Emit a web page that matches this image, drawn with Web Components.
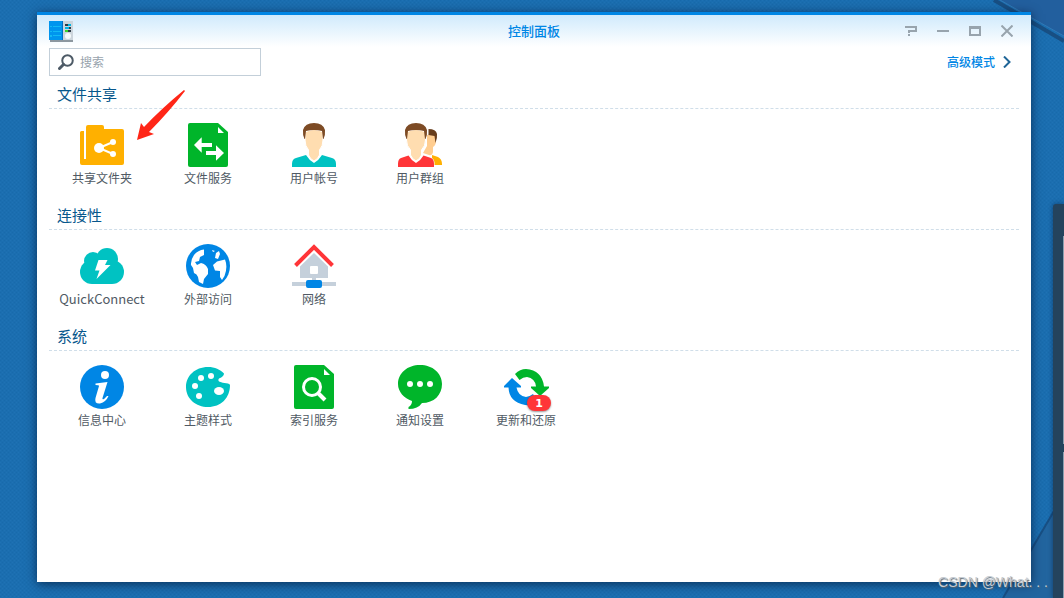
<!DOCTYPE html>
<html lang="zh-CN">
<head>
<meta charset="utf-8">
<meta name="viewport" content="width=device-width, initial-scale=1">
<title>控制面板</title>
<style>
    body {
        margin: 0;
        font-family: "Noto Sans CJK SC", sans-serif;
        font-size: 12px;
        color: #505a64;
    }
</style>
</head>
<body>
<dsm-desktop>
    <dsm-window window-title="控制面板">
        <control-toolbar></control-toolbar>
        <panel-section heading="文件共享">
            <panel-item icon="folder" label="共享文件夹" pointed></panel-item>
            <panel-item icon="service" label="文件服务"></panel-item>
            <panel-item icon="user" label="用户帐号"></panel-item>
            <panel-item icon="group" label="用户群组"></panel-item>
        </panel-section>
        <panel-section heading="连接性">
            <panel-item icon="cloud" label="QuickConnect" lang="en"></panel-item>
            <panel-item icon="globe" label="外部访问"></panel-item>
            <panel-item icon="network" label="网络"></panel-item>
        </panel-section>
        <panel-section heading="系统">
            <panel-item icon="info" label="信息中心"></panel-item>
            <panel-item icon="palette" label="主题样式"></panel-item>
            <panel-item icon="index" label="索引服务"></panel-item>
            <panel-item icon="bubble" label="通知设置"></panel-item>
            <panel-item icon="update" label="更新和还原" badge="1"></panel-item>
        </panel-section>
    </dsm-window>
    <span slot="watermark">CSDN @What. . .</span>
</dsm-desktop>

<script>
const ICONS = {
    folder: `
        <path fill="#ffb000" d="M0 9.5Q0 8 1.5 8H4V36H6V4Q6 2 8 2H22Q24 2 24 4V6H42Q44 6 44 8V40Q44 42 42 42H2Q0 42 0 40Z"/>
        <path stroke="#fff" stroke-width="2" fill="none" d="M33 19L19 25L33 31"/>
        <g fill="#fff"><circle cx="19" cy="25" r="5"/><circle cx="33" cy="19" r="3"/><circle cx="33" cy="31" r="3"/></g>`,
    service: `
        <path fill="#00b52a" d="M4 0H32L42 9V42Q42 44 40 44H4Q2 44 2 42V2Q2 0 4 0Z"/>
        <path fill="#fff" d="M32 4V10H38ZM8 22L15.700 14.300V20H26V24H15.700V29.700ZM38 30L30 22.300V28H20V32H30V37.700Z"/>`,
    user: `
        <path fill="#00c2c2" d="M0 44V41Q0 36 4 35L14 32Q17 37 22 40Q27 37 30 32L40 35Q44 36 44 41V44Z"/>
        <path fill="#ffddb0" stroke="#fff" stroke-width="1" d="M13 9Q22 4 31 9L31 17Q31 23 27.500 27V32Q26 36 22 38Q18 36 16.500 32V27Q13 23 13 17Z"/>
        <path fill="#7d4b25" d="M12.500 16Q10.500 12 11 7Q13 0 22 0Q31 0 33 7Q33.500 12 31.500 16H31L30 8Q22 6 14 8L13 16Z"/>`,
    group: `
        <path fill="#ffb000" d="M34 32L40 34Q44 36 44 41V42H36.500Q37 37 34 35Z"/>
        <path fill="#ffcd90" d="M29 12L38 10V18Q38 22 35 24V29Q34 33 31 32L25 30L29 23Z"/>
        <path fill="#683d1c" d="M30.500 6Q38 6 39 11Q39.500 15 37.500 20L36.500 13L30.500 12Z"/>
        <path fill="#ff3538" d="M0 44V41Q0 36 3 35L10.500 32.500Q13 37 18 40Q23 37 25.500 32.500L33 35Q36 36 36 41V44Z"/>
        <path fill="#ffddb0" stroke="#fff" stroke-width="1" d="M8.500 9Q18 4 27.500 9L27.500 17Q27.500 23 23.500 27V32Q22 36 18 38Q14 36 12.500 32V27Q8.500 23 8.500 17Z"/>
        <path fill="#7d4b25" d="M8.500 16Q6.500 12 7 7Q9 0 18 0Q27 0 29 7Q29.500 12 27.500 16H27L26 8Q18 6 10 8L9 16Z"/>`,
    cloud: `
        <g fill="#00c2c2"><circle cx="12" cy="28" r="12"/><circle cx="32" cy="28" r="12"/><circle cx="13" cy="17" r="9"/><circle cx="27" cy="15" r="11"/><path d="M12 18H32V40H12Z"/></g>
        <path fill="#fff" d="M18.500 16H27.500L25 21H30.500L16.500 35L19.500 26.500H15Z"/>`,
    globe: `
        <circle cx="22" cy="22" r="22" fill="#0086e5"/>
        <path fill="#fff" d="M18 5.500Q12 6 8 11Q4.500 16 5 21L7 24L8 29Q11 30 12 33L13 38L17 40L18 35L22 30V25Q20 20 15 19L11 21L9 18L13 17L14 13L18 11ZM27 21L31 17.500L39 15.500Q42 23 38.500 32L36 36L34 33V27L29 26.500ZM30 9L33 7L34 10L32 15L29 14ZM26 6L29 7L27 8Z"/>`,
    network: `
        <path fill="#c5d0db" d="M22 9L36 22.500V34H24V38H44V42H0V38H20V34H8V22.500Z"/>
        <rect x="18" y="22" width="8" height="8" rx="1" fill="#fff"/>
        <rect x="14" y="36" width="16" height="8" rx="2" fill="#0086e5"/>
        <path fill="none" stroke="#ff3538" stroke-width="4" d="M3.500 21.500L22 3L40.500 21.500"/>`,
    info: `
        <circle cx="22" cy="22" r="22" fill="#0086e5"/>
        <circle cx="25" cy="10" r="4" fill="#fff"/>
        <path fill="#fff" d="M15.500 18.500L27.500 17L22.500 33Q22 35 24 34L27 31H28.500Q26 37 20 38.500Q14 39 15.500 33L19 21Q19 20 15.500 20Z"/>`,
    palette: `
        <path fill="#00c2c2" d="M38 8.500C34 4.500 29 2 22 2C9 2 0 11 0 22C0 34 10 42 22 42C35 42 44 33 44 20Q44 19 42 18.500Q36 18 33 16.500Q31.500 15 33 13.500Q38 11.500 38 8.500Z"/>
        <g fill="#fff"><circle cx="15" cy="13" r="3"/><circle cx="25" cy="11" r="3"/><circle cx="9" cy="21" r="3"/><circle cx="13" cy="31" r="3"/><ellipse cx="33" cy="26" rx="5" ry="4"/></g>`,
    index: `
        <path fill="#00b52a" d="M4 0H32L42 9V42Q42 44 40 44H4Q2 44 2 42V2Q2 0 4 0Z"/>
        <path fill="#fff" d="M32 4V10H38Z"/>
        <circle cx="20" cy="22" r="8.500" fill="none" stroke="#fff" stroke-width="3"/>
        <path stroke="#fff" stroke-width="4" d="M26 28L33 35"/>`,
    bubble: `
        <path fill="#00b52a" d="M22 0C9.500 0 0 8 0 19C0 27 6 33 14 36Q14 40 10.500 42V44Q20 44 24 38C36 38 44 30 44 19C44 8 34.500 0 22 0Z"/>
        <g fill="#fff"><circle cx="12" cy="19" r="3"/><circle cx="22" cy="19" r="3"/><circle cx="32" cy="19" r="3"/></g>`,
    update: `
        <path fill="#00b52a" d="M11 9Q16 4 22 4Q38 5 40 21.500H45V23L36 31L27 23V21.500H32Q31 13 23 12Q19 12 15.500 15Z"/>
        <path fill="#0086e5" d="M8 13L17 21V22.500H12.500Q14 31 22 32Q25 32 29 29L33 36Q27 41 21 40Q5 37 4.500 22.500H0V21Z"/>`
};

class DsmDesktop extends HTMLElement {
    constructor() {
        super();
        this.attachShadow({ mode: 'open' }).innerHTML = `
            <style>${DsmDesktop.styles}</style>
            <svg class="wallpaper" viewBox="0 0 1064 598" preserveAspectRatio="none" aria-hidden="true">
                <defs>
                    <pattern id="weave" width="4" height="4" patternUnits="userSpaceOnUse">
                        <rect width="4" height="4" fill="#1b6eb0"/>
                        <path d="M0 0H1V1H0ZM2 2H3V3H2Z" fill="#186aab"/>
                        <path d="M2 0H3V1H2ZM0 2H1V3H0Z" fill="#1f72b4"/>
                    </pattern>
                </defs>
                <rect width="1064" height="598" fill="url(#weave)"/>
                <path d="M1000 0H1064V36Z" fill="#225f9e"/>
                <path d="M994 0L1064 41" stroke="#184f83" stroke-width="4"/>
                <path d="M1000 0L1064 36" stroke="#3179b5" stroke-width="1"/>
                <path d="M1064 494L1003 598H1064Z" fill="#22659f"/>
                <path d="M1064 494L1003 598" stroke="#184f83" stroke-width="2"/>
            </svg>
            <div class="widget"><div></div><div></div></div>
            <slot></slot>
            <div class="watermark"><slot name="watermark"></slot></div>
        `;
    }

    static get styles() {
        return /* css */`
            :host {
                display: flex;
                position: relative;
                overflow: hidden;
                box-sizing: border-box;
                min-height: 100vh;
                padding: 12px 33px 16px 37px;
                background: #1b6eb0;
            }

            .wallpaper {
                position: absolute;
                inset: 0;
                width: 100%;
                height: 100%;
            }

            /* side widget, mostly past the right edge */
            .widget {
                position: absolute;
                top: 204px;
                right: 0;
                bottom: 0;
                width: 11px;
                box-sizing: border-box;
                padding: 32px 0 0 10px;
                display: flex;
                flex-direction: column;
                gap: 8px;
                background: #24435d;
                border-radius: 3px 0 0 0;
                box-shadow: 0 0 5px rgba(0, 20, 50, 0.5);
            }

            .widget div {
                flex: 0 0 208px;
                background: #8ba0b1;
            }

            .watermark {
                position: absolute;
                right: 16px;
                bottom: 7px;
                font-family: "Liberation Sans", sans-serif;
                font-size: 14px;
                line-height: 18px;
                color: #c6ccd2;
                text-shadow: 1px 1px 1px #5a6670;
                white-space: nowrap;
            }
        `;
    }
}

class DsmWindow extends HTMLElement {
    connectedCallback() {
        const title = this.getAttribute('window-title') || '';
        this.attachShadow({ mode: 'open' }).innerHTML = `
            <style>${DsmWindow.styles}</style>
            <header>
                <svg class="logo" width="24" height="21" viewBox="0 0 24 21" aria-hidden="true">
                    <path fill="#8d979f" d="M1 19H24V21H1Z"/>
                    <path fill="#0095ee" d="M0 0H14V19H0Z"/>
                    <path fill="#006fc4" d="M13 0H14V19H13Z"/>
                    <path fill="#ccd5dc" d="M14 0H24V19H14Z"/>
                    <path fill="#12b9f5" d="M1 5H3V6H1ZM4 5H12V6H4ZM1 10H3V11H1ZM4 10H12V11H4ZM1 14H3V16H1ZM4 14H12V15H4Z"/>
                    <path fill="#2e3c48" d="M16 3H19V5H16ZM20 6H22V8H20ZM19 9H22V11H19Z"/>
                    <path fill="#00b7e4" d="M19 3H22V5H19ZM16 6H20V8H16Z"/>
                    <path fill="#3ad32a" d="M16 9H19V11H16Z"/>
                    <circle cx="19" cy="15" r="3" fill="#f5f9fc"/>
                </svg>
                <h1>${title}</h1>
                <div class="controls">
                    <button aria-label="帮助"><svg width="12" height="12"><path d="M0 2H11V6H4V8M4 9V11"/></svg></button>
                    <button aria-label="最小化"><svg width="12" height="12"><path d="M0 6H12"/></svg></button>
                    <button aria-label="最大化"><svg width="12" height="12"><path d="M0 2.500H12" stroke-width="3"/><path d="M1 3V10H11V3"/></svg></button>
                    <button aria-label="关闭"><svg width="12" height="12"><path d="M0.500 0.500L11.500 11.500M11.500 0.500L0.500 11.500"/></svg></button>
                </div>
            </header>
            <main><slot></slot></main>
        `;
    }

    static get styles() {
        return /* css */`
            :host {
                position: relative;
                flex: 1;
                min-width: 0;
                background: #fff linear-gradient(#d0eafc, #fff) no-repeat 0 0 / 100% 32px;
                border-top: 3px solid #0086e5;
                box-shadow: 0 2px 10px rgba(0, 20, 50, 0.7);
            }

            header {
                display: grid;
                grid-template-columns: 1fr auto 1fr;
                align-items: center;
                height: 32px;
                padding: 0 8px;
            }

            .logo {
                margin-left: 4px;
            }

            h1 {
                margin: 0;
                font-size: 13px;
                line-height: 20px;
                font-weight: 500;
                color: #0086e5;
            }

            .controls {
                display: flex;
                justify-content: flex-end;
            }

            button {
                display: flex;
                align-items: center;
                justify-content: center;
                width: 32px;
                height: 24px;
                padding: 0;
                border: 0;
                background: none;
            }

            button svg {
                fill: none;
                stroke: #98a4ad;
                stroke-width: 2;
            }

            main {
                padding: 1px 12px 0;
            }
        `;
    }
}

class ControlToolbar extends HTMLElement {
    constructor() {
        super();
        this.attachShadow({ mode: 'open' }).innerHTML = `
            <style>${ControlToolbar.styles}</style>
            <label>
                <svg width="16" height="16" viewBox="0 0 16 16" aria-hidden="true">
                    <circle cx="9.500" cy="6.500" r="5.250"/>
                    <path d="M5.500 10.500L1.500 14.500" stroke-width="3" stroke-linecap="round"/>
                </svg>
                <input type="text" placeholder="搜索" aria-label="搜索">
            </label>
            <a href="#advanced">高级模式
                <svg width="8" height="12" viewBox="0 0 8 12" aria-hidden="true"><path d="M1 0.500L6.500 6L1 11.500"/></svg>
            </a>
        `;
    }

    static get styles() {
        return /* css */`
            :host {
                display: flex;
                align-items: center;
                justify-content: space-between;
                padding-right: 8px;
            }

            label {
                display: flex;
                align-items: center;
                gap: 6px;
                box-sizing: border-box;
                width: 212px;
                height: 28px;
                padding: 0 8px;
                border: 1px solid #c3cfd9;
                background: #fff;
            }

            svg {
                flex: none;
                fill: none;
                stroke: #4d5a66;
                stroke-width: 2;
            }

            input {
                flex: 1;
                min-width: 0;
                padding: 0 0 2px;
                border: 0;
                outline: 0;
                background: none;
                font: inherit;
                color: inherit;
            }

            input::placeholder {
                color: #98a3ad;
            }

            a {
                display: flex;
                align-items: center;
                gap: 8px;
                font-weight: 500;
                line-height: 20px;
                color: #0086e5;
                text-decoration: none;
            }

            a svg {
                stroke: #1f6597;
            }
        `;
    }
}

class PanelSection extends HTMLElement {
    connectedCallback() {
        this.attachShadow({ mode: 'open' }).innerHTML = `
            <style>${PanelSection.styles}</style>
            <h2>${this.getAttribute('heading')}</h2>
            <div class="items"><slot></slot></div>
        `;
    }

    static get styles() {
        return /* css */`
            :host {
                display: block;
                padding-top: 5px;
            }

            h2 {
                margin: 0;
                padding: 0 8px 1px;
                border-bottom: 1px dashed #d0dee9;
                font-size: 15px;
                font-weight: 400;
                line-height: 26px;
                color: #07578c;
            }

            .items {
                display: flex;
                flex-wrap: wrap;
                padding: 14px 0 8px;
            }
        `;
    }
}

class PanelItem extends HTMLElement {
    connectedCallback() {
        const badge = this.getAttribute('badge');
        this.attachShadow({ mode: 'open' }).innerHTML = `
            <style>${PanelItem.styles}</style>
            <a href="#${this.getAttribute('icon')}">
                <span class="icon">
                    <svg width="46" height="44" viewBox="-1 0 46 44" aria-hidden="true">${ICONS[this.getAttribute('icon')]}</svg>
                    ${badge ? `<span class="badge">${badge}</span>` : ''}
                </span>
                <span>${this.getAttribute('label')}</span>
            </a>
            ${this.hasAttribute('pointed') ? `
                <svg class="arrow" width="50" height="52" viewBox="0 0 50 52" aria-hidden="true">
                    <path fill="#ff2617" d="M0 50L4 33L7 37Q25 18 47 0L48 1Q31 23 12 42L17 44Z"/>
                </svg>
            ` : ''}
        `;
    }

    static get styles() {
        return /* css */`
            :host {
                display: block;
                position: relative;
                width: 106px;
            }

            :host([lang="en"]) {
                font-size: 13px;
            }

            a {
                display: flex;
                flex-direction: column;
                align-items: center;
                line-height: 22px;
                color: inherit;
                text-decoration: none;
                white-space: nowrap;
            }

            .icon {
                position: relative;
                height: 44px;
            }

            svg {
                display: block;
            }

            .badge {
                position: absolute;
                right: -2px;
                bottom: -2px;
                width: 24px;
                height: 16px;
                border-radius: 8px;
                background: #ff3538;
                box-shadow: 0 1px 2px rgba(0, 0, 0, 0.4);
                color: #fff;
                font-family: "DejaVu Sans", sans-serif;
                font-size: 11px;
                font-weight: 700;
                line-height: 17px;
                text-align: center;
            }

            .arrow {
                position: absolute;
                left: 88px;
                top: -33px;
                z-index: 1;
            }
        `;
    }
}

customElements.define('dsm-desktop', DsmDesktop);
customElements.define('dsm-window', DsmWindow);
customElements.define('control-toolbar', ControlToolbar);
customElements.define('panel-section', PanelSection);
customElements.define('panel-item', PanelItem);
</script>
</body>
</html>
